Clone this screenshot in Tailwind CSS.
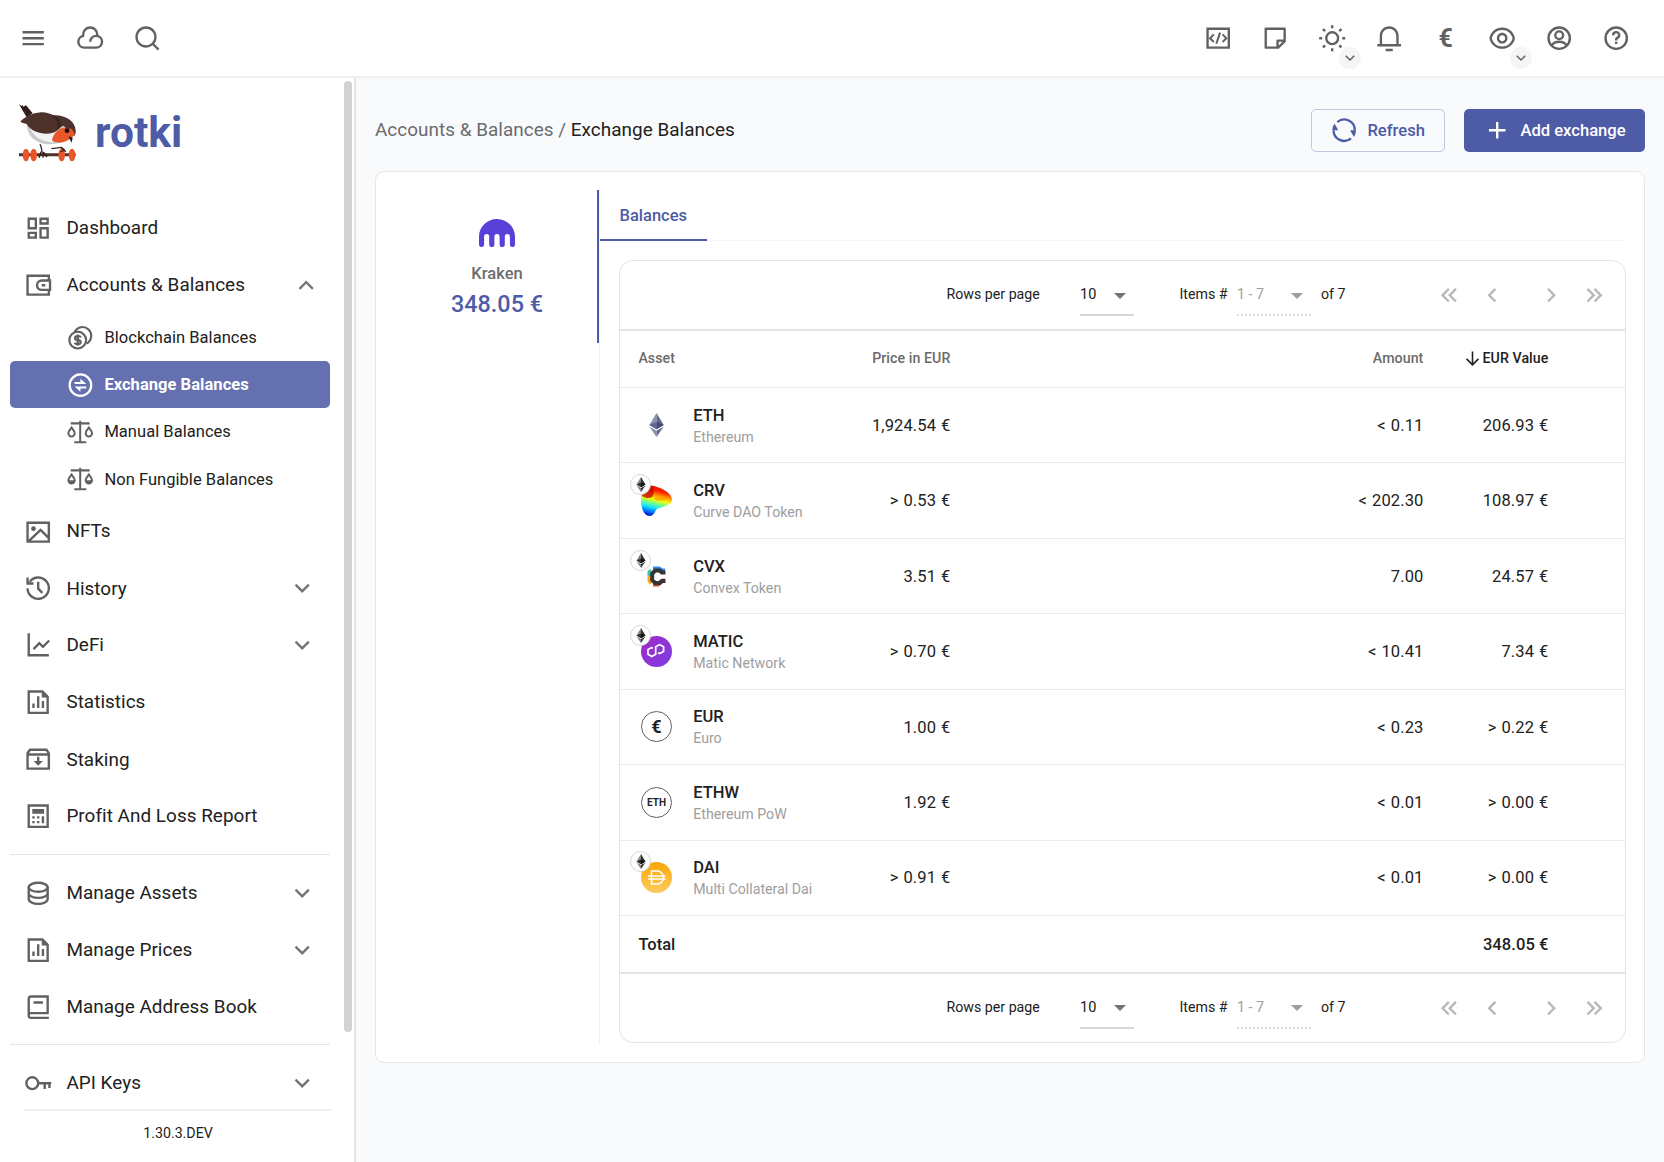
<!DOCTYPE html>
<html lang="en">
<head>
<meta charset="utf-8">
<title>rotki</title>
<script src="https://cdn.jsdelivr.net/npm/@tailwindcss/browser@4"></script>
</head>
<body class="w-[1664px] h-[1162px] overflow-hidden bg-[#f9fafc] font-[Roboto,sans-serif] text-[#212121]">

<!-- Icon sprite -->
<svg class="hidden">
  <g fill="none" stroke="currentColor" stroke-width="2">
    <symbol id="down" viewBox="0 0 24 24"><path fill="currentColor" stroke="none" d="M12 13.17L16.95 8.22L18.36 9.64L12 16L5.64 9.64L7.05 8.22Z"/></symbol>
    <symbol id="left" viewBox="0 0 24 24"><path fill="currentColor" d="M15.41 16.58L10.83 12l4.58-4.59L14 6l-6 6 6 6z"/></symbol>
    <symbol id="dleft" viewBox="0 0 24 24"><path fill="currentColor" d="M18.41 7.41L17 6l-6 6 6 6 1.41-1.41L13.83 12zM12.41 7.41L11 6l-6 6 6 6 1.41-1.41L7.83 12z"/></symbol>
    <symbol id="file-chart" viewBox="0 0 24 24"><path fill="currentColor" fill-rule="evenodd" d="M3 2h13l5 5v15H3zM5 4v16h14V8h-4V4zM11 7h2v10h-2zM15 11h2v6h-2zM7 13h2v4H7z"/></symbol>
    <symbol id="scale" viewBox="0 0 24 24"><path fill="none" stroke="currentColor" stroke-width="1.700" d="M12 1.500v18.500M4 3.700h16M7 19.700h10.200"/><path fill="none" stroke="currentColor" stroke-width="1.700" d="M4.700 7.200C3 9.400 2 10.500 2 12a2.700 2.700 0 0 0 5.400 0C7.400 10.500 6.400 9.400 4.700 7.200zM19.300 7.200c-1.700 2.200-2.700 3.300-2.700 4.800a2.700 2.700 0 0 0 5.400 0c0-1.500-1-2.600-2.700-4.800z"/></symbol>
    <symbol id="eth" viewBox="0 0 24 40"><path fill="#8a92b2" d="M12 0v27L0 20z"/><path fill="#62688f" d="M12 0v27l12-7z"/><path fill="#62688f" d="M12 14.500V27L0 20z"/><path fill="#454a75" d="M12 14.500V27l12-7z"/><path fill="#8a92b2" d="M0 22.500l12 7V40z"/><path fill="#62688f" d="M24 22.500l-12 7V40z"/></symbol>
    <symbol id="ethb" viewBox="0 0 24 40"><path fill="#828384" d="M12 0v27L0 20z"/><path fill="#343434" d="M12 0v27l12-7z"/><path fill="#2f3030" d="M12 14.500V27L0 20z"/><path fill="#131313" d="M12 14.500V27l12-7z"/><path fill="#828384" d="M0 22.500l12 7V40z"/><path fill="#393939" d="M24 22.500l-12 7V40z"/></symbol>
  </g>
</svg>

<!-- Top bar -->
<header class="h-[78px] flex items-start justify-between border-b-2 border-[#eff1f1] bg-white text-[#616161]">
  <div class="flex pl-[4.600px] pt-[10px]">
    <div class="w-[57px] h-[57px] grid place-items-center"><svg class="size-[28.400px]" viewBox="0 0 24 24" fill="currentColor"><path d="M3 6H21V8H3V6M3 11H21V13H3V11M3 16H21V18H3V16Z"/></svg></div>
    <div class="w-[57px] h-[57px] grid place-items-center"><svg class="size-[28.400px]" viewBox="0 0 24 24" fill="none" stroke="currentColor" stroke-width="2"><path d="M7 20A5 5 0 0 1 6 10.100V9A6 6 0 0 1 18 9v1.100A5 5 0 0 1 17 20ZM17 10a5 5 0 0 0-5 5"/></svg></div>
    <div class="w-[57px] h-[57px] grid place-items-center"><svg class="size-[28.400px]" viewBox="0 0 24 24" fill="currentColor"><path d="M18.031 16.617l4.283 4.282-1.415 1.415-4.282-4.283A8.960 8.960 0 0 1 11 20c-4.968 0-9-4.032-9-9s4.032-9 9-9 9 4.032 9 9a8.960 8.960 0 0 1-1.969 5.617zm-2.006-.742A6.977 6.977 0 0 0 18 11c0-3.868-3.133-7-7-7-3.868 0-7 3.132-7 7 0 3.867 3.132 7 7 7a6.977 6.977 0 0 0 4.875-1.975l.15-.15z"/></svg></div>
  </div>
  <div class="flex pr-[19.200px] pt-[10px]">
    <div class="w-[56.900px] h-[57px] grid place-items-center"><svg class="size-[28.400px]" viewBox="0 0 24 24" fill="none" stroke="currentColor" stroke-width="2"><path d="M3 4h18v16H3z"/><path stroke-width="1.700" d="M8.300 8.800L5.100 12l3.200 3.200M15.700 8.800l3.200 3.200-3.200 3.200M13.600 7.300l-3.200 9.400"/></svg></div>
    <div class="w-[56.900px] h-[57px] grid place-items-center"><svg class="size-[28.400px]" viewBox="0 0 24 24" fill="currentColor"><path d="M21 15L15 20.996L4.002 21C3.449 21 3 20.555 3 20.007V3.993C3 3.445 3.445 3 3.993 3H20.007C20.555 3 21 3.456 21 4.002V15ZM19 5H5V19H13V14C13 13.487 13.386 13.065 13.883 13.007L14 13L19 12.999V5ZM18.171 14.999L15 15V18.169L18.171 14.999Z"/></svg></div>
    <div class="relative w-[56.900px] h-[57px] grid place-items-center"><svg class="size-[28.400px]" viewBox="0 0 24 24" fill="none" stroke="currentColor" stroke-width="2"><circle cx="12" cy="12" r="5"/><path d="M12 1v2.500M12 20.500V23M1 12h2.500M20.500 12H23M4.200 4.200L6 6M18 18l1.800 1.800M4.200 19.800L6 18M18 6l1.800-1.800"/></svg>
      <span class="absolute left-[35.400px] top-[37px] size-[22px] rounded-full bg-[#f5f5f5] grid place-items-center"><svg class="size-[18px]" viewBox="0 0 24 24"><use href="#down"/></svg></span></div>
    <div class="w-[56.900px] h-[57px] grid place-items-center"><svg class="size-[28.400px]" viewBox="0 0 24 24" fill="currentColor"><path d="M20 17H22V19H2V17H4V10C4 5.582 7.582 2 12 2C16.418 2 20 5.582 20 10V17ZM18 17V10C18 6.686 15.314 4 12 4C8.686 4 6 6.686 6 10V17H18ZM9 21H15V23H9V21Z"/></svg></div>
    <div class="w-[56.900px] h-[57px] grid place-items-center text-[25px] leading-none font-bold">€</div>
    <div class="relative w-[56.900px] h-[57px] grid place-items-center"><svg class="size-[28.400px]" viewBox="0 0 24 24" fill="currentColor"><path d="M12 3C17.392 3 21.878 6.880 22.819 12C21.878 17.120 17.392 21 12 21C6.608 21 2.122 17.120 1.182 12C2.122 6.880 6.608 3 12 3ZM12 19C16.236 19 19.860 16.052 20.778 12C19.860 7.948 16.236 5 12 5C7.765 5 4.140 7.948 3.223 12C4.140 16.052 7.765 19 12 19ZM12 16.500C9.515 16.500 7.500 14.485 7.500 12C7.500 9.515 9.515 7.500 12 7.500C14.486 7.500 16.500 9.515 16.500 12C16.500 14.485 14.486 16.500 12 16.500ZM12 14.500C13.381 14.500 14.500 13.381 14.500 12C14.500 10.619 13.381 9.500 12 9.500C10.620 9.500 9.500 10.619 9.500 12C9.500 13.381 10.620 14.500 12 14.500Z"/></svg>
      <span class="absolute left-[35.400px] top-[37px] size-[22px] rounded-full bg-[#f5f5f5] grid place-items-center"><svg class="size-[18px]" viewBox="0 0 24 24"><use href="#down"/></svg></span></div>
    <div class="w-[56.900px] h-[57px] grid place-items-center"><svg class="size-[28.400px]" viewBox="0 0 24 24" fill="none" stroke="currentColor" stroke-width="2"><circle cx="12" cy="12" r="9"/><circle cx="12" cy="9.500" r="3.300"/><path d="M5.500 18.200c1.400-2 3.700-3.200 6.500-3.200s5.100 1.200 6.500 3.200"/></svg></div>
    <div class="w-[56.900px] h-[57px] grid place-items-center"><svg class="size-[28.400px]" viewBox="0 0 24 24" fill="none" stroke="currentColor" stroke-width="2"><circle cx="12" cy="12" r="9"/><path d="M9.500 9.600A2.500 2.500 0 1 1 12.900 11.700c-.6.250-.9.700-.9 1.200v1.100M12 15v2"/></svg></div>
  </div>
</header>

<div class="flex h-[1084px]">
  <!-- Navigation drawer -->
  <aside class="relative w-[356px] shrink-0 border-r-2 border-[#e4e4e4] bg-white text-[18.900px] tracking-[0.040px]">
    <div class="flex items-center h-[121.500px] pl-[18px]">
      <svg class="size-[60px] -mt-[11px]" viewBox="24 24 180 180">
        <path fill="#2e1d1a" d="M27 28l8 5 3-3 2 5 8-4 20 24-18 12-13-22z"/>
        <path fill="#c9cacb" d="M50 88c2 34 22 52 50 58 34 6 68-4 84-22l-30-40z"/>
        <path fill="#f2f2f2" d="M58 96c12 30 40 46 72 46l40-6-30-44z"/>
        <path fill="#4d322b" d="M31 80c14-14 34-26 62-28 14-1 28 4 38 9 34-2 66 18 66 46 0 6-1 12-4 16L160 92c-10 2-12 16-34 22-26 6-62-2-76-27-6-2-15-4-19-7z"/>
        <path fill="#3c2621" d="M118 58c20 10 30 26 22 48l10-10c6-20-8-34-32-38z"/>
        <path fill="#e8562a" d="M162 98c-6 0-12 3-18 8-10 8-16 18-18 30 6 8 24 8 38 4 10-4 20-10 26-16l4-8-8-14z"/>
        <circle cx="171" cy="107" r="7" fill="#111"/><path fill="#222" d="M176 124l12 4-3 15-5-9z"/>
        <path fill="none" stroke="#3a2622" stroke-width="4" d="M90 148l4 10 2 14M124 161l30-4 10 8"/>
        <path stroke="#4d322b" stroke-width="9" d="M27 179h170"/>
        <path stroke="#2b1b18" stroke-width="4" d="M93 170l-6 18M99 170v18M101 172l10 14"/>
        <g fill="#e8562a"><ellipse cx="48" cy="180" rx="10" ry="19"/><ellipse cx="71" cy="180" rx="10" ry="19"/><ellipse cx="155" cy="180" rx="10" ry="19"/><ellipse cx="186" cy="180" rx="10" ry="19"/></g>
        <path fill="none" stroke="#3a2622" stroke-width="4" d="M154 158l8 8-10 4M162 166l6 4"/>
      </svg>
      <span class="ml-[17px] -mt-[11px] text-[42.500px] font-bold tracking-[0] text-[#4e5ba6]">rotki</span>
    </div>

    <nav class="pl-[24px] pr-[25px]">
      <div class="h-[56.900px] flex items-center"><svg class="size-[28.400px] mr-[14px] text-[#616161]" viewBox="0 0 24 24" fill="none" stroke="currentColor" stroke-width="2"><path d="M4 4h6v8H4zM14 4h6v4h-6zM14 12h6v8h-6zM4 16h6v4H4z"/></svg>Dashboard</div>
      <div class="h-[56.900px] flex items-center"><svg class="size-[28.400px] mr-[14px] text-[#616161]" viewBox="0 0 24 24" fill="none" stroke="currentColor" stroke-width="2"><path d="M21 8V4H3v16h18v-4M22 8h-7a4 4 0 0 0 0 8h7zM15 12h3"/></svg>Accounts &amp; Balances<svg class="ml-auto mr-[8.500px] size-[28.400px] rotate-180 text-[#757575]" viewBox="0 0 24 24"><use href="#down"/></svg></div>
      <div class="h-[47.400px] pt-[2px] pl-[42px] flex items-center text-[16.500px]"><svg class="size-[28.400px] mr-[10px] text-[#616161]" viewBox="0 0 24 24" fill="none" stroke="currentColor" stroke-width="1.800"><circle cx="9.900" cy="13.600" r="7.100"/><path d="M7.300 6.600A7.400 7.400 0 1 1 17.400 16.500M12.700 11.300c-.4-.8-1.300-1.100-2.700-1.100-3.200 0-3.200 3.300 0 3.400 3.200.1 3.200 3.400 0 3.400-1.400 0-2.300-.3-2.700-1.100M10 8.900v9.400"/></svg>Blockchain Balances</div>
      <div class="h-[47.400px] pt-[2px] -ml-[14px] -mr-px pl-[56px] flex items-center rounded-[5px] bg-[#6570b0] text-[16.500px] font-bold text-white"><svg class="size-[28.400px] mr-[10px]" viewBox="0 0 24 24" fill="none" stroke="currentColor" stroke-width="1.900"><circle cx="12.200" cy="12" r="9.100"/><path fill="currentColor" stroke="none" d="M7.200 9.200h5V6.500l5 4.500h-10zM17.200 14.800h-5v2.700l-5-4.500h10z"/></svg>Exchange Balances</div>
      <div class="h-[47.400px] pt-[2px] pl-[42px] flex items-center text-[16.500px]"><svg class="size-[28.400px] mr-[10px] text-[#616161]" viewBox="0 0 24 24"><use href="#scale"/></svg>Manual Balances</div>
      <div class="h-[47.400px] pt-[2px] pl-[42px] flex items-center text-[16.500px]"><svg class="size-[28.400px] mr-[10px] text-[#616161]" viewBox="0 0 24 24"><use href="#scale"/><path fill="currentColor" d="M2 12h5.400a2.700 2.700 0 0 1-5.400 0zM16.600 12H22a2.700 2.700 0 0 1-5.400 0z"/></svg>Non Fungible Balances</div>
      <div class="h-[56.900px] flex items-center"><svg class="size-[28.400px] mr-[14px] mt-px text-[#616161]" viewBox="0 0 24 24" fill="none" stroke="currentColor" stroke-width="2"><path d="M3 4h18v16H3zM4 19.500L14 10l7 7"/><circle cx="8" cy="9" r="2" fill="currentColor" stroke="none"/></svg>NFTs</div>
      <div class="h-[56.900px] pt-px flex items-center"><svg class="size-[28.400px] mr-[14px] text-[#616161]" viewBox="0 0 24 24" fill="none" stroke="currentColor" stroke-width="2"><path d="M3 12a9 9 0 1 0 2-5.700M3 3v5h5M4.500 6.500L3 8M12 6.500V12.400l3.500 3.500"/></svg>History<svg class="ml-auto mr-[13px] size-[28.400px] text-[#757575]" viewBox="0 0 24 24"><use href="#down"/></svg></div>
      <div class="h-[56.900px] flex items-center"><svg class="size-[28.400px] mr-[14px] text-[#616161]" viewBox="0 0 24 24" fill="none" stroke="currentColor" stroke-width="2"><path d="M4 2v18.500h17M8 15.300l5-5 3 3 5.300-5.300"/></svg>DeFi<svg class="ml-auto mr-[13px] size-[28.400px] text-[#757575]" viewBox="0 0 24 24"><use href="#down"/></svg></div>
      <div class="h-[56.900px] flex items-center"><svg class="size-[28.400px] mr-[14px] text-[#616161]" viewBox="0 0 24 24"><use href="#file-chart"/></svg>Statistics</div>
      <div class="h-[56.900px] pt-[2px] flex items-center"><svg class="size-[28.400px] -mt-px mr-[14px] text-[#616161]" viewBox="0 0 24 24" fill="none" stroke="currentColor" stroke-width="2"><path d="M3 7l2-3h14l2 3v13H3zM3 8h18M12 10v5"/><path fill="currentColor" stroke="none" d="M8 13.500h8l-4 4z"/></svg>Staking</div>
      <div class="h-[56.900px] flex items-center"><svg class="size-[28.400px] mr-[14px] text-[#616161]" viewBox="0 0 24 24"><path fill="currentColor" fill-rule="evenodd" d="M3 2h18v20H3zM5 4v16h14V4zM7 6h10v4H7zM7 12h2v2H7zM7 16h2v2H7zM11 12h2v2h-2zM11 16h2v2h-2zM15 12h2v6h-2z"/></svg>Profit And Loss Report</div>
      <div class="-ml-[14px] -mr-px mt-[9.500px] mb-[10.500px] h-px bg-[#e6e6e6]"></div>
      <div class="h-[56.900px] flex items-center"><svg class="size-[28.400px] mr-[14px] text-[#616161]" viewBox="0 0 24 24" fill="none" stroke="currentColor" stroke-width="2"><ellipse cx="12" cy="7" rx="8" ry="3.800"/><path d="M4 7v10c0 2.200 3.600 4 8 4s8-1.800 8-4V7M4 12c0 2.200 3.600 4 8 4s8-1.800 8-4"/></svg>Manage Assets<svg class="ml-auto mr-[13px] size-[28.400px] text-[#757575]" viewBox="0 0 24 24"><use href="#down"/></svg></div>
      <div class="h-[56.900px] flex items-center"><svg class="size-[28.400px] mr-[14px] text-[#616161]" viewBox="0 0 24 24"><use href="#file-chart"/></svg>Manage Prices<svg class="ml-auto mr-[13px] size-[28.400px] text-[#757575]" viewBox="0 0 24 24"><use href="#down"/></svg></div>
      <div class="h-[56.900px] flex items-center"><svg class="size-[28.400px] mr-[14px] text-[#616161]" viewBox="0 0 24 24" fill="none" stroke="currentColor" stroke-width="2"><path d="M21 21H5.500A1.700 1.700 0 0 1 4 19.500V5a2 2 0 0 1 2-2h14v14H5.500A1.500 1.500 0 0 0 4 18.500M8 8h8"/></svg>Manage Address Book</div>
      <div class="-ml-[14px] -mr-px mt-[8.500px] mb-[9.500px] h-px bg-[#e6e6e6]"></div>
      <div class="h-[54px] flex items-center pt-[2px]"><svg class="size-[28.400px] mr-[14px] text-[#616161]" viewBox="0 0 24 24" fill="none" stroke="currentColor" stroke-width="2"><circle cx="7" cy="12" r="5"/><path d="M12 12h11M17.500 12v5M21.500 12v4"/></svg>API Keys<svg class="ml-auto mr-[13px] size-[28.400px] text-[#757575]" viewBox="0 0 24 24"><use href="#down"/></svg></div>
      <div class="-mr-[3px] h-[2px] bg-[#f0f0f0]"></div>
      <div class="pt-[12px] pl-[3px] text-center text-[14.200px] leading-[20px] tracking-[0]">1.30.3.DEV</div>
    </nav>
    <div class="absolute left-[344px] top-[3px] w-[8px] h-[951px] rounded-full bg-[#d2d2d2]"></div>
  </aside>

  <!-- Page -->
  <main class="flex-1 pl-[19px] pr-[19px] pt-[31px]">
    <div class="flex items-center h-[43px]">
      <div class="text-[18.900px] tracking-[0.040px] text-[#6b6b6d]">Accounts &amp; Balances / <span class="text-[#212121]">Exchange Balances</span></div>
      <button class="ml-auto flex items-center w-[134px] h-[43px] pl-[18px] rounded-[5px] border border-[#c2c6e0] text-[16.600px] font-medium text-[#4e5ba6]">
        <svg class="size-[28.400px] mr-[9.500px]" viewBox="0 0 24 24" fill="none" stroke="currentColor" stroke-width="1.900"><path d="M6.200 5.100A9 9 0 0 1 21 12M17.800 18.900A9 9 0 0 1 3 12"/><path fill="currentColor" stroke="none" d="M17 12h5a10 10 0 0 1-1.800 5.700zM7 12H2a10 10 0 0 1 1.800-5.700z"/></svg><span class="pt-px">Refresh</span></button>
      <button class="ml-[19px] flex items-center w-[181.500px] h-[43px] pl-[19px] rounded-[5px] bg-[#4e5ba6] text-[16.600px] font-medium text-white">
        <svg class="size-[28.400px] mr-[9.500px]" viewBox="0 0 24 24" fill="none" stroke="currentColor" stroke-width="2"><path d="M12 5v14M5 12h14"/></svg><span class="pt-px">Add exchange</span></button>
    </div>

    <section class="mt-[19px] h-[892px] flex rounded-[9px] border border-[#e4e6e8] bg-white py-[18px] pr-[18px]">
      <!-- Exchange list -->
      <div class="w-[224px] shrink-0 border-r border-[#f2f2f2]">
        <div class="h-[153px] flex flex-col items-center border-r-2 border-[#4e5ba6] pt-[28.500px]">
          <svg class="w-[36px] h-[28px] ml-[20px]" viewBox="0 0 36 28" fill="#5741d9"><path d="M18 0C8 0 0 8 0 17.500V25.500a2.550 2.550 0 0 0 5.100 0V17.500a2.550 2.550 0 0 1 5.100 0v8a2.600 2.600 0 0 0 5.200 0v-8a2.600 2.600 0 0 1 5.200 0v8a2.600 2.600 0 0 0 5.200 0v-8a2.550 2.550 0 0 1 5.100 0v8a2.550 2.550 0 0 0 5.100 0V17.500C36 8 28 0 18 0z"/></svg>
          <div class="ml-[21px] mt-[17px] text-[16.500px] leading-[20px] font-medium text-[#6b6b6b]">Kraken</div>
          <div class="ml-[21px] mt-[6px] text-[23.400px] leading-[28px] font-medium text-[#4e5ba6]">348.05 €</div>
        </div>
      </div>

      <!-- Balances -->
      <div class="flex-1">
        <div class="h-[51px] border-b border-[#f4f4f4]">
          <div class="w-[106.500px] h-[50.500px] pt-[5px] grid place-items-center border-b-2 border-[#4e5ba6] text-[16.500px] font-medium text-[#4e5ba6]">Balances</div>
        </div>
        <div class="ml-[19px] mt-[19px] h-[783px] rounded-[14px] border border-[#e4e4e4]">
          <div class="flex h-[70px] items-center border-b-2 border-[#e5e5e5] text-[14.200px]">
            <span class="w-[133.500px] ml-[326.500px] -mt-[1px]">Rows per page</span>
            <span class="flex items-center w-[54px] h-[42px] pt-[2px] border-b-2 border-[#d8d8d8] text-[14.500px]">10<svg class="ml-auto mr-[8px] mt-px" width="12" height="6"><path fill="#757575" d="M0 0h12L6 6z"/></svg></span>
            <span class="ml-[45.500px] -mt-[1px] w-[57.500px]">Items #</span>
            <span class="flex items-center w-[74px] h-[42px] pt-[2px] border-b-2 border-dotted border-[#dcdcdc] text-[#9e9e9e]">1 - 7<svg class="ml-auto mr-[8px] mt-px" width="12" height="6"><path fill="#9e9e9e" d="M0 0h12L6 6z"/></svg></span>
            <span class="ml-[10px] -mt-[1px] w-[102px]">of 7</span>
            <span class="flex text-[#b8b8b8]">
              <svg class="size-[28.400px] ml-[12px]" viewBox="0 0 24 24"><use href="#dleft"/></svg>
              <svg class="size-[28.400px] ml-[14.500px]" viewBox="0 0 24 24"><use href="#left"/></svg>
              <svg class="size-[28.400px] ml-[31px] rotate-180" viewBox="0 0 24 24"><use href="#left"/></svg>
              <svg class="size-[28.400px] ml-[14.500px] rotate-180" viewBox="0 0 24 24"><use href="#dleft"/></svg>
            </span>
          </div>
          <div class="grid grid-cols-[148px_164px_473px_125px_1fr] items-center h-[57px] pl-[18.400px] border-b border-[#ececec] text-[14.200px] tracking-[0.060px] font-medium text-[#6b6b6b]">
            <span>Asset</span><span class="text-right">Price in EUR</span><span class="text-right">Amount</span>
            <span class="flex justify-end items-center text-[#212121]"><svg class="size-[19px] mr-px" viewBox="0 0 24 24" fill="none" stroke="currentColor" stroke-width="2"><path d="M12 3v17M4.500 12.500L12 20l7.500-7.500"/></svg>EUR Value</span>
          </div>

          <div class="grid grid-cols-[55px_148px_127.500px_473px_125px_1fr] items-center h-[75.450px] border-b border-[#ececec] text-[16.500px]">
            <span class="ml-[29px]"><svg class="w-[15px] h-[24px]"><use href="#eth"/></svg></span>
            <span class="ml-[18.200px] whitespace-nowrap"><b class="block font-medium leading-[24px]">ETH</b><i class="block not-italic text-[14.200px] leading-[19px] text-[#9e9e9e]">Ethereum</i></span>
            <span class="text-right whitespace-nowrap pt-[2px] tracking-[0.120px] [word-spacing:0.800px]">1,924.54 €</span><span class="text-right pt-[2px] tracking-[0.120px] [word-spacing:0.800px]">&lt; 0.11</span><span class="text-right pt-[2px] tracking-[0.120px] [word-spacing:0.800px]">206.93 €</span>
          </div>
          <div class="grid grid-cols-[55px_148px_127.500px_473px_125px_1fr] items-center h-[75.450px] border-b border-[#ececec] text-[16.500px]">
            <span class="relative ml-[21px] size-[31px]"><svg class="size-[31px]" viewBox="0 0 31 31"><defs><linearGradient id="crv" x1=".6" y1="0" x2=".35" y2="1"><stop offset="0" stop-color="#e00000"/><stop offset=".2" stop-color="#ff2a00"/><stop offset=".36" stop-color="#ffb000"/><stop offset=".48" stop-color="#eaff15"/><stop offset=".6" stop-color="#6fff90"/><stop offset=".74" stop-color="#10e0ff"/><stop offset=".88" stop-color="#0070ff"/><stop offset="1" stop-color="#0010c0"/></linearGradient></defs><path fill="url(#crv)" d="M0 14C0 5 4 1 10 0.500c8 1 21 7 21 14 0 5-7 7-13 8.500-4 1-4 7.500-9 8C3 31 0 24 0 14z"/><path fill="#ff9a00" d="M14 13c5-3 10-2 12 1-4 2-8 2-12 1z" opacity=".7"/><path fill="#c00000" d="M1 11C3 3 7 1 11 1c3 2 2 8 0 11-3 2-7 1-10-1z" opacity=".75"/></svg>
              <span class="absolute -left-[11px] -top-[11px] size-[21px] rounded-full border border-[#d5d5d5] bg-white grid place-items-center"><svg class="w-[10px] h-[15px]"><use href="#ethb"/></svg></span></span>
            <span class="ml-[18.200px] whitespace-nowrap"><b class="block font-medium leading-[24px]">CRV</b><i class="block not-italic text-[14.200px] leading-[19px] text-[#9e9e9e]">Curve DAO Token</i></span>
            <span class="text-right pt-[1px] tracking-[0.120px] [word-spacing:0.800px]">&gt; 0.53 €</span><span class="text-right pt-[1px] tracking-[0.120px] [word-spacing:0.800px]">&lt; 202.30</span><span class="text-right pt-[1px] tracking-[0.120px] [word-spacing:0.800px]">108.97 €</span>
          </div>
          <div class="grid grid-cols-[55px_148px_127.500px_473px_125px_1fr] items-center h-[75.450px] border-b border-[#ececec] text-[16.500px]">
            <span class="relative ml-[21px] size-[31px]"><svg class="size-[31px]" viewBox="0 0 31 31" fill="none" stroke-width="4"><path stroke="#ffa51f" d="M8.500 15v5l2 2"/><path stroke="#36c5a8" d="M8.500 15v-4l2-1"/><path stroke="#2f8df5" d="M12 7.500h6l3 2h3"/><path stroke="#e8442c" d="M12 23.500h5l5-4h2"/><path stroke="#353535" d="M24.500 11.500h-3.700l-2-2h-4.600l-3 3v6.500l3 3h4.600l2-2h3.700"/></svg>
              <span class="absolute -left-[11px] -top-[11px] size-[21px] rounded-full border border-[#d5d5d5] bg-white grid place-items-center"><svg class="w-[10px] h-[15px]"><use href="#ethb"/></svg></span></span>
            <span class="ml-[18.200px] whitespace-nowrap"><b class="block font-medium leading-[24px]">CVX</b><i class="block not-italic text-[14.200px] leading-[19px] text-[#9e9e9e]">Convex Token</i></span>
            <span class="text-right pt-[2px] tracking-[0.120px] [word-spacing:0.800px]">3.51 €</span><span class="text-right pt-[2px] tracking-[0.120px] [word-spacing:0.800px]">7.00</span><span class="text-right pt-[2px] tracking-[0.120px] [word-spacing:0.800px]">24.57 €</span>
          </div>
          <div class="grid grid-cols-[55px_148px_127.500px_473px_125px_1fr] items-center h-[75.450px] border-b border-[#ececec] text-[16.500px]">
            <span class="relative ml-[21px] size-[31px]"><svg class="size-[31px]" viewBox="0 0 31 31"><defs><linearGradient id="mat" x1="0" y1="0" x2="1" y2="1"><stop stop-color="#a229c5"/><stop offset="1" stop-color="#7b3fe4"/></linearGradient></defs><circle cx="15.500" cy="15.500" r="15.500" fill="url(#mat)"/><path fill="none" stroke="#fff" stroke-width="1.700" d="M12 12.200l-1.500-.6-3.500 2v4.600l3.800 2.200 3.900-2.200v-7.400l3.900-2.200 4 2.200v4.600l-4 2.200-1.600-.8"/></svg>
              <span class="absolute -left-[11px] -top-[11px] size-[21px] rounded-full border border-[#d5d5d5] bg-white grid place-items-center"><svg class="w-[10px] h-[15px]"><use href="#ethb"/></svg></span></span>
            <span class="ml-[18.200px] whitespace-nowrap"><b class="block font-medium leading-[24px]">MATIC</b><i class="block not-italic text-[14.200px] leading-[19px] text-[#9e9e9e]">Matic Network</i></span>
            <span class="text-right pt-[2px] tracking-[0.120px] [word-spacing:0.800px]">&gt; 0.70 €</span><span class="text-right pt-[2px] tracking-[0.120px] [word-spacing:0.800px]">&lt; 10.41</span><span class="text-right pt-[2px] tracking-[0.120px] [word-spacing:0.800px]">7.34 €</span>
          </div>
          <div class="grid grid-cols-[55px_148px_127.500px_473px_125px_1fr] items-center h-[75.450px] border-b border-[#ececec] text-[16.500px]">
            <span class="ml-[21px] size-[31px] rounded-full border border-[#606060] grid place-items-center text-[18px] leading-none font-bold">€</span>
            <span class="ml-[18.200px] whitespace-nowrap"><b class="block font-medium leading-[24px]">EUR</b><i class="block not-italic text-[14.200px] leading-[19px] text-[#9e9e9e]">Euro</i></span>
            <span class="text-right pt-[2px] tracking-[0.120px] [word-spacing:0.800px]">1.00 €</span><span class="text-right pt-[2px] tracking-[0.120px] [word-spacing:0.800px]">&lt; 0.23</span><span class="text-right pt-[2px] tracking-[0.120px] [word-spacing:0.800px]">&gt; 0.22 €</span>
          </div>
          <div class="grid grid-cols-[55px_148px_127.500px_473px_125px_1fr] items-center h-[75.450px] border-b border-[#ececec] text-[16.500px]">
            <span class="ml-[21px] size-[31px] pt-px rounded-full border border-[#606060] grid place-items-center text-[10px] leading-none font-bold">ETH</span>
            <span class="ml-[18.200px] whitespace-nowrap"><b class="block font-medium leading-[24px]">ETHW</b><i class="block not-italic text-[14.200px] leading-[19px] text-[#9e9e9e]">Ethereum PoW</i></span>
            <span class="text-right pt-[2px] tracking-[0.120px] [word-spacing:0.800px]">1.92 €</span><span class="text-right pt-[2px] tracking-[0.120px] [word-spacing:0.800px]">&lt; 0.01</span><span class="text-right pt-[2px] tracking-[0.120px] [word-spacing:0.800px]">&gt; 0.00 €</span>
          </div>
          <div class="grid grid-cols-[55px_148px_127.500px_473px_125px_1fr] items-center h-[75.450px] border-b border-[#ececec] text-[16.500px]">
            <span class="relative ml-[21px] size-[31px]"><svg class="size-[31px]" viewBox="0 0 31 31"><defs><linearGradient id="dai" x1="0" y1="0" x2="0" y2="1"><stop stop-color="#f9a606"/><stop offset="1" stop-color="#fbcc5f"/></linearGradient></defs><circle cx="15.500" cy="15.500" r="15.500" fill="url(#dai)"/><path fill="none" stroke="#fff" stroke-width="1.500" d="M10.500 9H16c4 0 6.500 3 6.500 6.500S20 22 16 22h-5.500zM7 14h17.500M7 17h17.500"/></svg>
              <span class="absolute -left-[11px] -top-[11px] size-[21px] rounded-full border border-[#d5d5d5] bg-white grid place-items-center"><svg class="w-[10px] h-[15px]"><use href="#ethb"/></svg></span></span>
            <span class="ml-[18.200px] whitespace-nowrap"><b class="block font-medium leading-[24px]">DAI</b><i class="block not-italic text-[14.200px] leading-[19px] text-[#9e9e9e]">Multi Collateral Dai</i></span>
            <span class="text-right pt-[1px] tracking-[0.120px] [word-spacing:0.800px]">&gt; 0.91 €</span><span class="text-right pt-[1px] tracking-[0.120px] [word-spacing:0.800px]">&lt; 0.01</span><span class="text-right pt-[1px] tracking-[0.120px] [word-spacing:0.800px]">&gt; 0.00 €</span>
          </div>
          <div class="flex items-center h-[57.700px] pt-[3px] pl-[18.400px] pr-[76.500px] justify-between border-b-2 border-[#e5e5e5] text-[16.500px] font-medium"><span>Total</span><span class="tracking-[0.080px]">348.05 €</span></div>
          <div class="flex h-[68px] items-center text-[14.200px]">
            <span class="w-[133.500px] ml-[326.500px] -mt-[1px]">Rows per page</span>
            <span class="flex items-center w-[54px] h-[42px] pt-[2px] border-b-2 border-[#d8d8d8] text-[14.500px]">10<svg class="ml-auto mr-[8px] mt-px" width="12" height="6"><path fill="#757575" d="M0 0h12L6 6z"/></svg></span>
            <span class="ml-[45.500px] -mt-[1px] w-[57.500px]">Items #</span>
            <span class="flex items-center w-[74px] h-[42px] pt-[2px] border-b-2 border-dotted border-[#dcdcdc] text-[#9e9e9e]">1 - 7<svg class="ml-auto mr-[8px] mt-px" width="12" height="6"><path fill="#9e9e9e" d="M0 0h12L6 6z"/></svg></span>
            <span class="ml-[10px] -mt-[1px] w-[102px]">of 7</span>
            <span class="flex text-[#b8b8b8]">
              <svg class="size-[28.400px] ml-[12px]" viewBox="0 0 24 24"><use href="#dleft"/></svg>
              <svg class="size-[28.400px] ml-[14.500px]" viewBox="0 0 24 24"><use href="#left"/></svg>
              <svg class="size-[28.400px] ml-[31px] rotate-180" viewBox="0 0 24 24"><use href="#left"/></svg>
              <svg class="size-[28.400px] ml-[14.500px] rotate-180" viewBox="0 0 24 24"><use href="#dleft"/></svg>
            </span>
          </div>
        </div>
      </div>
    </section>
  </main>
</div>
</body>
</html>
